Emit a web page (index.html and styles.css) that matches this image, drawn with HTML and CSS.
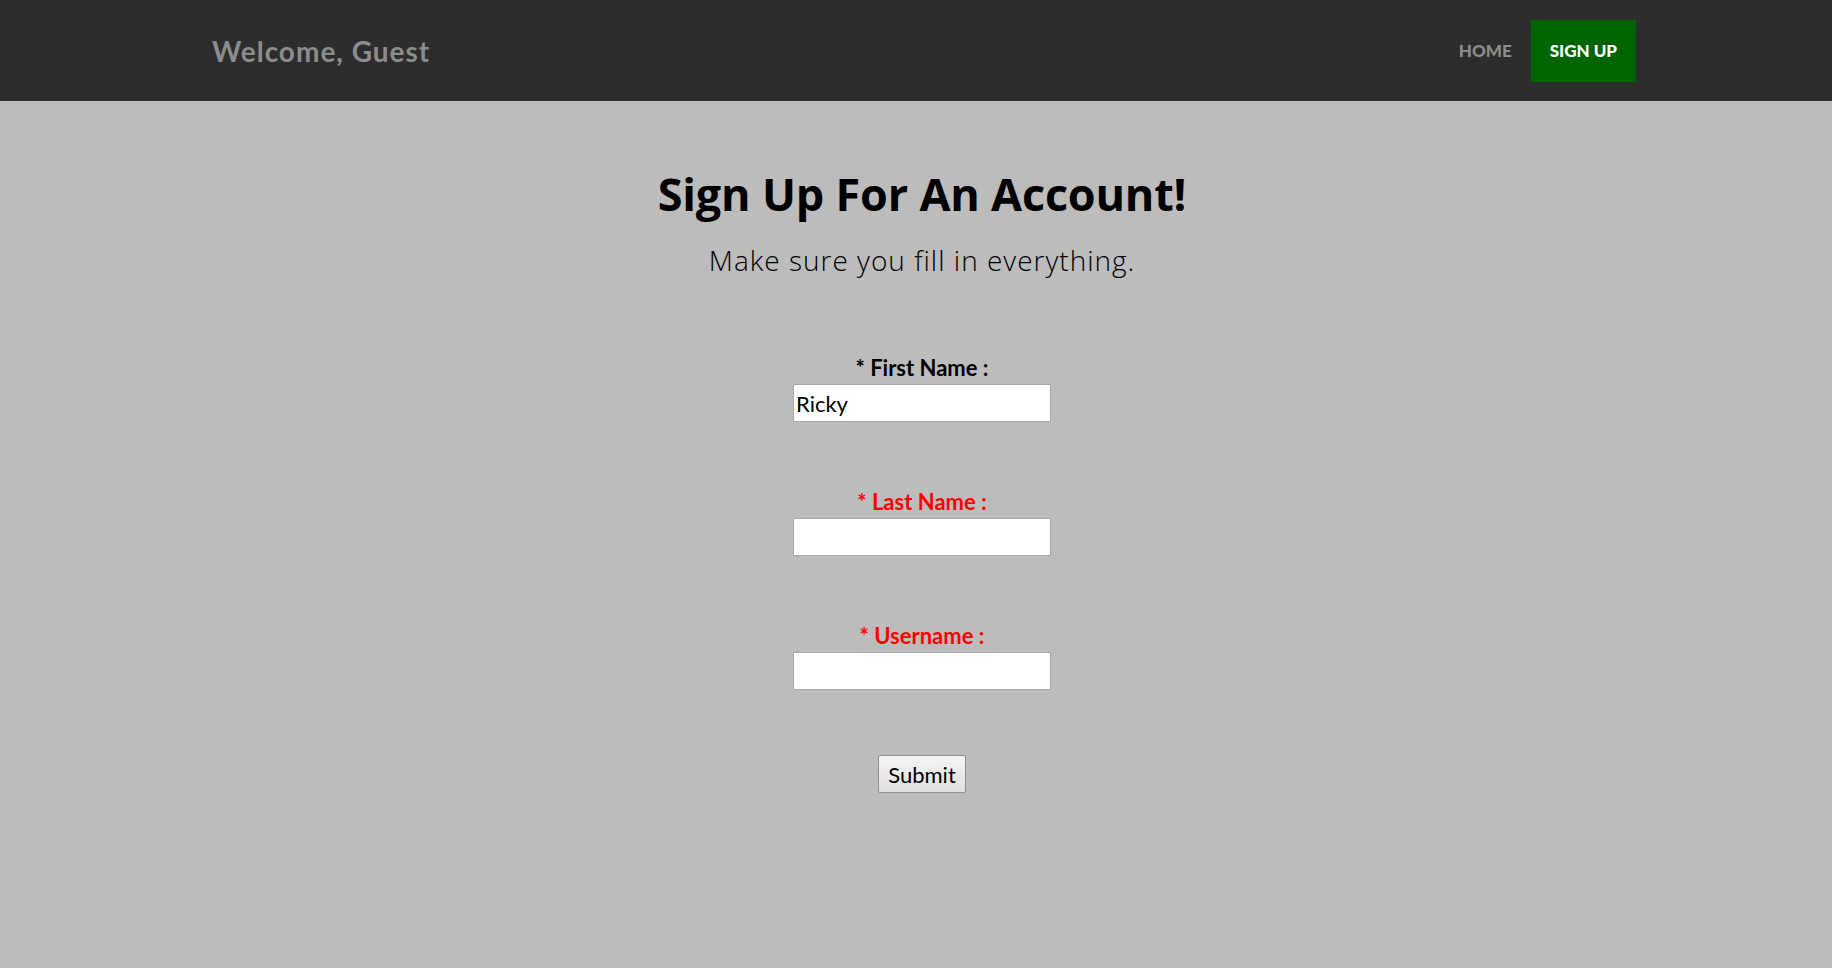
FILE: index.html
```html
<!DOCTYPE html>
<html lang="en">
<head>
<meta charset="utf-8">
<title>Sign Up</title>
<link rel="stylesheet" href="styles.css">
</head>
<body>
<header class="topbar">
  <div class="topbar-inner">
    <div class="brand">Welcome, Guest</div>
    <nav class="nav">
      <a class="nav-link" href="#">HOME</a>
      <a class="nav-link active" href="#">SIGN UP</a>
    </nav>
  </div>
</header>
<main class="main">
  <section class="intro">
    <h1 class="title">Sign Up For An Account!</h1>
    <p class="subtitle">Make sure you fill in everything.</p>
  </section>
  <form class="signup">
    <div class="field">
      <label class="label">* First Name :</label>
      <input class="input" type="text" value="Ricky">
    </div>
    <div class="field">
      <label class="label error">* Last Name :</label>
      <input class="input" type="text">
    </div>
    <div class="field">
      <label class="label error">* Username :</label>
      <input class="input" type="text">
    </div>
    <div class="actions">
      <button class="submit" type="button">Submit</button>
    </div>
  </form>
</main>
</body>
</html>
```

FILE: styles.css
```css
html, body {
  margin: 0;
  padding: 0;
}
body {
  background: #bcbcbc;
  font-family: Lato, "Liberation Sans", sans-serif;
  min-height: 968px;
}
.topbar {
  background: #2d2d2d;
  height: 101px;
}
.topbar-inner {
  width: 1440px;
  margin: 0 auto;
  height: 100%;
  display: flex;
  align-items: center;
  justify-content: space-between;
  box-sizing: border-box;
  padding-left: 16px;
}
.brand {
  color: #8c8c8c;
  font-weight: 700;
  font-size: 28px;
  letter-spacing: 1px;
}
.nav {
  display: flex;
  align-items: center;
}
.nav-link {
  color: #8c8c8c;
  text-decoration: none;
  font-weight: 900;
  font-size: 17px;
  height: 62px;
  display: flex;
  align-items: center;
  padding: 0 19px;
}
.nav-link.active {
  background: #006400;
  color: #ffffff;
}
.main {
  display: flex;
  flex-direction: column;
  align-items: center;
  padding-left: 12px;
}
.intro {
  text-align: center;
  padding-top: 63px;
}
.title {
  margin: 0;
  font-family: "Open Sans", sans-serif;
  font-weight: 700;
  font-size: 45px;
  line-height: 60px;
  color: #000;
  letter-spacing: -0.2px;
}
.subtitle {
  margin: 18px 0 0;
  font-family: "Open Sans", sans-serif;
  font-weight: 300;
  font-size: 28px;
  line-height: 36px;
  color: #000;
  letter-spacing: 1px;
}
.signup {
  display: flex;
  flex-direction: column;
  align-items: center;
  margin-top: 76px;
}
.field {
  display: flex;
  flex-direction: column;
  align-items: center;
  margin-bottom: 66px;
}
.label {
  font-weight: 700;
  font-size: 22px;
  line-height: 28px;
  color: #000;
  margin-bottom: 2px;
}
.label.error {
  color: #ff0000;
}
.input {
  width: 258px;
  height: 38px;
  box-sizing: border-box;
  border: 1px solid #a9a9a9;
  background: #fff;
  font-family: Lato, sans-serif;
  font-size: 22px;
  padding: 0 2px;
  color: #000;
  margin: 0;
}
.actions {
  margin-top: -1px;
}
.submit {
  width: 88px;
  height: 38px;
  font-family: Lato, sans-serif;
  font-size: 22px;
  color: #000;
  background: linear-gradient(#f4f4f4, #e0e0e0);
  border: 1px solid #8f8f8f;
  border-radius: 2px;
  padding: 0;
}
```
